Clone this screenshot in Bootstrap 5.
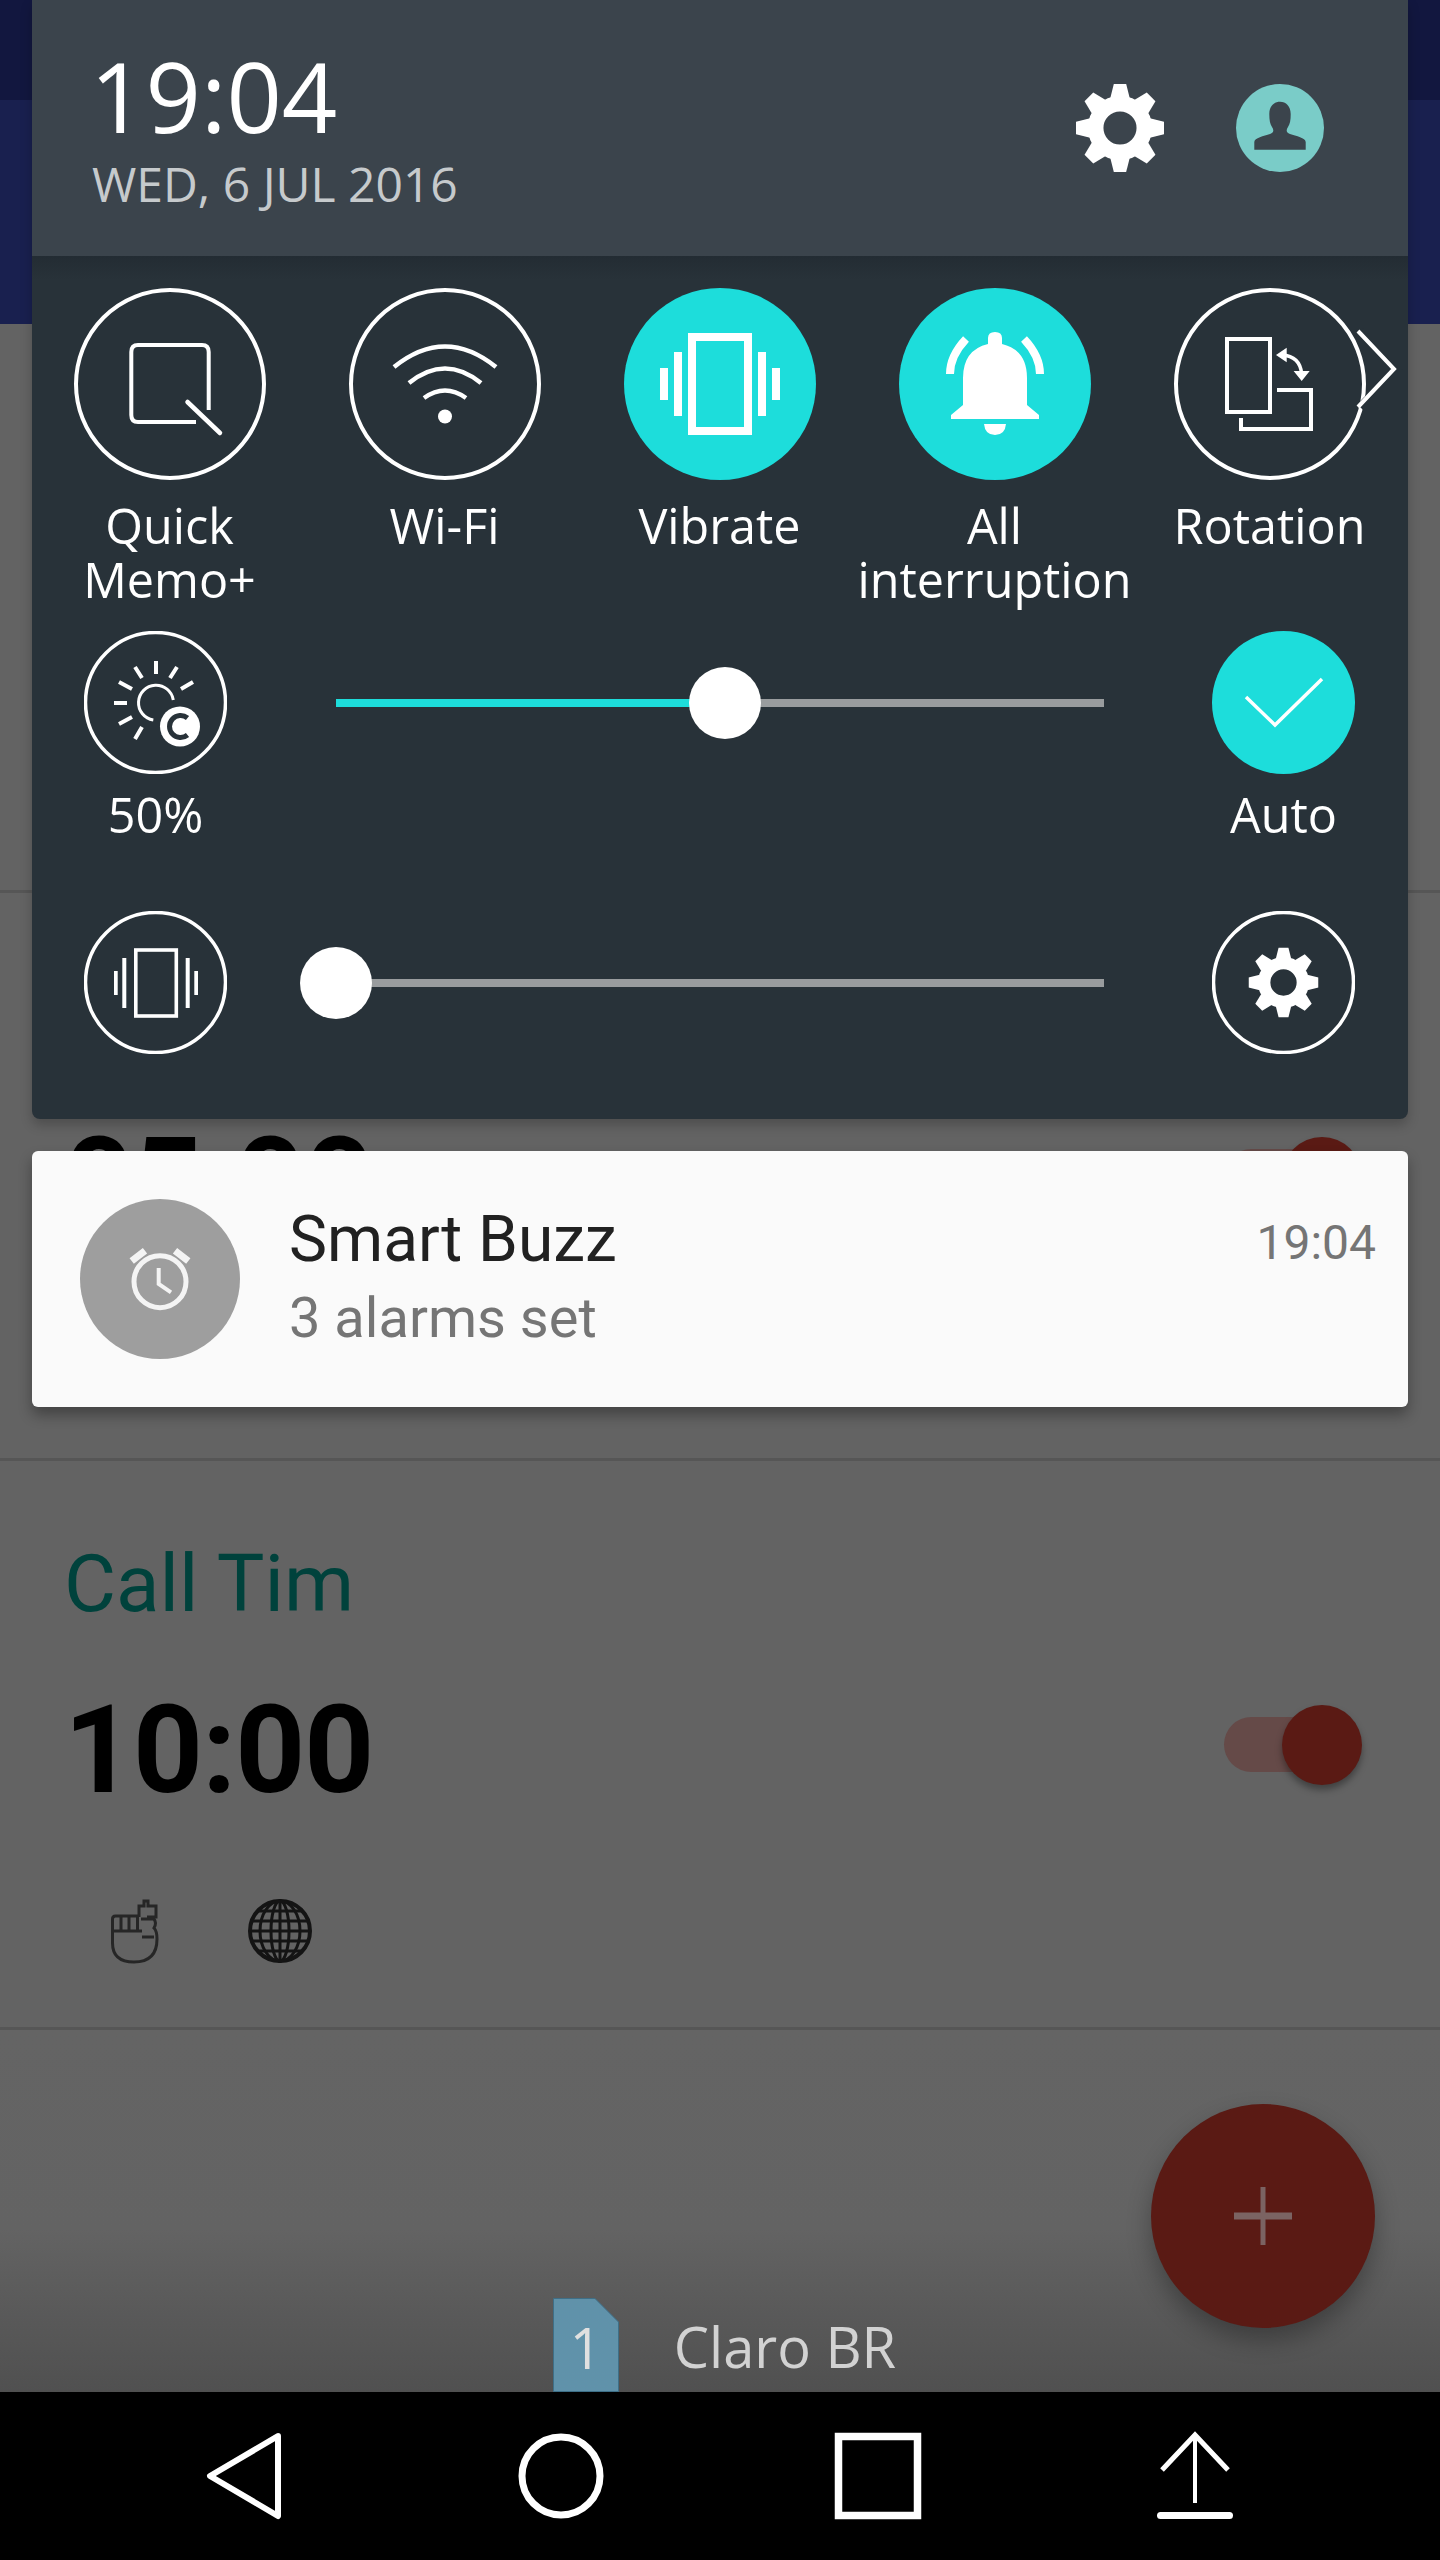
<!DOCTYPE html>
<html lang="en">
<head>
  <meta charset="UTF-8" />
  <title>Notification panel</title>
  <link rel="stylesheet" href="https://cdn.jsdelivr.net/npm/bootstrap@5.3.0/dist/css/bootstrap.min.css" />
  <style>
    html, body { margin: 0; background: #636363; }
    .phone { position: relative; width: 1440px; height: 2560px; overflow: hidden; background: #636363; font-family: "Open Sans", sans-serif; }

    /* app behind the panel */
    .band-top { height: 100px; background: #12173f; }
    .band-tabs { height: 224px; background: #19204f; }
    .alarm-row { border-bottom: 3px solid #565656; padding-left: 64px; overflow: hidden; }
    .alarm-title { font: 400 80px/90px Roboto, sans-serif; color: #00423c; padding-top: 78px; height: 220px; }
    .alarm-time { font: 700 122px/140px Roboto, sans-serif; color: #000; letter-spacing: -1px; }
    .alarm-switch { position: relative; width: 138px; height: 80px; margin-right: 78px; margin-bottom: 12px; }
    .switch-track { position: absolute; left: 0; top: 12px; width: 110px; height: 55px; border-radius: 28px; background: #654a48; }
    .switch-knob { position: absolute; right: 0; top: 0; width: 80px; height: 80px; border-radius: 50%; background: #5a1a14; box-shadow: 0 5px 7px rgba(0,0,0,.35); }
    .alarm-days { padding-left: 45px; gap: 89px; margin-top: 76px; }
    .soft-icon { filter: blur(.7px); }
    .list-foot { height: 362px; background: linear-gradient(#646464 0, #636363 55%, #505050 100%); }
    .sim-group { margin-left: 9px; gap: 55px; }
    .sim-label { font-size: 56px; line-height: 76px; color: #d2d2d2; padding-bottom: 8px; }
    .sim-card { position: relative; width: 66px; height: 94px; }
    .sim-num { position: absolute; left: 0; right: 0; top: 17px; text-align: center; font-size: 56px; line-height: 64px; color: #e0e0e0; }
    .fab { position: absolute; left: 1151px; top: 2104px; width: 224px; height: 224px; border-radius: 50%; background: #5a1a14; box-shadow: 0 12px 24px rgba(0,0,0,.3); }
    .navkeys { height: 168px; background: #000; padding-left: 85px; }
    .navkey { width: 317px; }

    /* quick settings panel */
    .drawer { position: absolute; left: 32px; top: 0; width: 1376px; height: 1119px; background: #283239; border-radius: 0 0 8px 8px; box-shadow: 0 6px 12px rgba(0,0,0,.22); }
    .drawer-head { height: 256px; background: #3b444c; padding: 0 84px 0 60px; }
    .clock { font-weight: 400; font-size: 97px; line-height: 100px; color: #fff; margin-left: -2px; padding-top: 45px; }
    .clock-date { font-size: 48px; line-height: 64px; color: #c6cacc; margin-top: 7px; }
    .head-gap { gap: 72px; }
    .tiles { display: grid; grid-template-columns: repeat(5, 275px); height: 375px; padding-top: 32px; position: relative; background: linear-gradient(#232c33 0, #283239 24px); border: 0; }
    .tile-label { font-size: 48.5px; line-height: 54px; color: #fff; text-align: center; margin-top: 18px; }
    .ring { display: block; width: 192px; height: 192px; margin: 0 auto; }
    .chevron { position: absolute; left: 1321px; top: 70px; }
    .slider-row { padding: 0 53px 0 52px; }
    .slider-cap { width: 143px; flex: none; }
    .ring-sm { display: block; width: 143px; height: 143px; }
    .cap-label { font-size: 48.5px; line-height: 64px; color: #fff; text-align: center; margin-top: 8px; white-space: nowrap; }
    .slider-rail { position: relative; flex: 1; height: 8px; margin: 68px 108px 0 109px; background: #999c9e; }
    .slider-fill { height: 8px; background: #1ddddb; }
    .slider-knob { position: absolute; top: -32px; width: 72px; height: 72px; margin-left: -36px; border-radius: 50%; background: #fff; }

    /* notification */
    .notice { position: absolute; left: 32px; top: 1151px; width: 1376px; height: 256px; background: #fafafa; border-radius: 6px; box-shadow: 0 8px 14px rgba(0,0,0,.32); padding: 48px 32px 0 48px; font-family: Roboto, sans-serif; }
    .notice-icon { width: 160px; height: 160px; flex: none; }
    .notice-body { padding-left: 49px; }
    .notice-title { font-size: 64px; line-height: 79px; color: #212121; margin-top: 1px; }
    .notice-text { font-size: 56px; line-height: 79px; color: #757575; }
    .notice-time { font-size: 48px; line-height: 79px; color: #757575; margin-top: 4px; }
  </style>
</head>
<body>

<svg width="0" height="0" class="position-absolute">
  <defs>
    <symbol id="gear" viewBox="-50 -50 100 100">
      <circle r="27.600" fill="none" stroke="#fff" stroke-width="17.600" />
      <g fill="#fff">
        <polygon id="gear-tooth" points="-7,-50 7,-50 11,-34 -11,-34" />
        <use href="#gear-tooth" transform="rotate(45)" />
        <use href="#gear-tooth" transform="rotate(90)" />
        <use href="#gear-tooth" transform="rotate(135)" />
        <use href="#gear-tooth" transform="rotate(180)" />
        <use href="#gear-tooth" transform="rotate(225)" />
        <use href="#gear-tooth" transform="rotate(270)" />
        <use href="#gear-tooth" transform="rotate(315)" />
      </g>
    </symbol>
  </defs>
</svg>

<div class="phone">

  <!-- App behind the panel -->
  <div class="band-top"></div>
  <div class="band-tabs"></div>
  <div class="alarm-row" style="height: 569px"></div>
  <div class="alarm-row" style="height: 568px">
    <div class="alarm-title">&nbsp;</div>
    <div class="d-flex justify-content-between align-items-center">
      <div class="alarm-time">05:00</div>
      <div class="alarm-switch"><div class="switch-track"></div><div class="switch-knob"></div></div>
    </div>
  </div>
  <div class="alarm-row" style="height: 569px">
    <div class="alarm-title">Call Tim</div>
    <div class="d-flex justify-content-between align-items-center">
      <div class="alarm-time">10:00</div>
      <div class="alarm-switch"><div class="switch-track"></div><div class="switch-knob"></div></div>
    </div>
    <div class="d-flex align-items-center alarm-days">
      <svg class="soft-icon" width="50" height="68" viewBox="0 0 50 68" fill="none" stroke="#262626" stroke-width="3">
        <path d="M3.500 34V22Q3.500 19 6.500 19H30M3.500 34H33M12 19V34M20 19V34M28.500 19V34" />
        <path d="M3.500 34V46Q3.500 65 25 65Q48 65 48 42Q48 34 45 31Q48 26 45 22H32" />
        <path d="M30 20V9H35V4H39V9H47V20H38" />
        <path d="M33 40H45" />
      </svg>
      <svg class="soft-icon" width="64" height="64" viewBox="-32 -32 64 64" fill="none" stroke="#141414">
        <circle r="30" stroke-width="4" />
        <g stroke-width="3">
          <ellipse rx="20" ry="30" />
          <ellipse rx="9" ry="30" />
          <path d="M-30 0H30M-28 -10H28M-28 10H28M-22 -20H22M-22 20H22M0 -30V30" />
        </g>
      </svg>
    </div>
  </div>
  <div class="list-foot d-flex justify-content-center align-items-end">
    <div class="sim-group d-flex align-items-end">
      <div class="sim-card">
        <svg width="66" height="94" viewBox="0 0 66 94" class="d-block">
          <path d="M.5 .5H42L65.500 24V93.500H.5Z" fill="#6092aa" stroke="#3e6f87" />
        </svg>
        <div class="sim-num">1</div>
      </div>
      <div class="sim-label">Claro BR</div>
    </div>
  </div>

  <!-- Navigation keys -->
  <div class="navkeys d-flex align-items-center">
    <div class="navkey d-flex justify-content-center">
      <svg width="90" height="90" viewBox="0 0 90 90" fill="none" stroke="#fff" stroke-width="6" stroke-linejoin="round"><path d="M79 5L11 45L79 85Z" /></svg>
    </div>
    <div class="navkey d-flex justify-content-center">
      <svg width="90" height="90" viewBox="0 0 90 90" fill="none" stroke="#fff" stroke-width="7"><circle cx="45" cy="45" r="39" /></svg>
    </div>
    <div class="navkey d-flex justify-content-center">
      <svg width="90" height="90" viewBox="0 0 90 90" fill="none" stroke="#fff" stroke-width="7.500"><rect x="5.500" y="5.500" width="79" height="79" /></svg>
    </div>
    <div class="navkey d-flex justify-content-center">
      <svg width="90" height="90" viewBox="0 0 90 90" fill="none" stroke="#fff">
        <path d="M45 5V72" stroke-width="4" />
        <path d="M12 39L45 4L78 39" stroke-width="5" />
        <path d="M10.500 84.500H79.500" stroke-width="7" stroke-linecap="round" />
      </svg>
    </div>
  </div>

  <!-- Add alarm -->
  <div class="fab d-flex align-items-center justify-content-center">
    <svg class="soft-icon" width="58" height="58" viewBox="0 0 58 58" fill="none" stroke="#7b6362"><path d="M29 0V58" stroke-width="5" /><path d="M0 29H58" stroke-width="7" /></svg>
  </div>

  <!-- Quick settings panel -->
  <div class="drawer">
    <div class="drawer-head d-flex justify-content-between">
      <div>
        <div class="clock">19:04</div>
        <div class="clock-date">WED, 6 JUL 2016</div>
      </div>
      <div class="d-flex align-items-center head-gap">
        <svg width="88" height="88"><use href="#gear" /></svg>
        <svg width="88" height="88" viewBox="0 0 88 88">
          <circle cx="44" cy="44" r="44" fill="#7accc8" />
          <path d="M18.300 65.700V58C18.300 54 28 52 34 50C38 48.500 38 46 36 43C34 40 33.300 36 33.300 30C33.300 22 38 17.700 44 17.700C50 17.700 54.700 22 54.700 30C54.700 36 54 40 52 43C50 46 50 48.500 54 50C60 52 69.700 54 69.700 58V65.700Z" fill="#3b444c" />
        </svg>
      </div>
    </div>

    <div class="tiles">
      <div>
        <svg class="ring" viewBox="0 0 192 192" fill="none" stroke="#fff">
          <circle cx="96" cy="96" r="94" stroke-width="4" />
          <path d="M134.700 122V64Q134.700 57 128 57H64Q57.300 57 57.300 64V127Q57.300 134 64 134H122" stroke-width="4" />
          <path d="M113.500 114L146 145" stroke-width="4.500" stroke-linecap="round" />
        </svg>
        <div class="tile-label">Quick<br />Memo+</div>
      </div>
      <div>
        <svg class="ring" viewBox="0 0 192 192" fill="none" stroke="#fff">
          <circle cx="96" cy="96" r="94" stroke-width="4" />
          <path d="M45 79Q96 38 147 79M60 95Q96 66 132 95M75 110Q96 95 117 110" stroke-width="4.500" />
          <circle cx="96" cy="128.500" r="7" fill="#fff" stroke="none" />
        </svg>
        <div class="tile-label">Wi-Fi</div>
      </div>
      <div>
        <svg class="ring" viewBox="0 0 192 192">
          <circle cx="96" cy="96" r="96" fill="#1ddddb" />
          <rect x="68" y="49" width="56" height="94" fill="none" stroke="#fff" stroke-width="8" />
          <path d="M36 80h8v32h-8zM50 64h8v64h-8zM134 64h8v64h-8zM148 80h8v32h-8z" fill="#fff" />
        </svg>
        <div class="tile-label">Vibrate</div>
      </div>
      <div>
        <svg class="ring" viewBox="0 0 192 192">
          <circle cx="96" cy="96" r="96" fill="#1ddddb" />
          <path d="M89 50Q89 44 96 44Q103 44 103 50V56Q128 62 128 90V117L140 127V131H52V127L64 117V90Q64 62 89 56Z" fill="#fff" />
          <path d="M85 136H107Q106 147 96 147Q86 147 85 136Z" fill="#fff" />
          <path d="M67 51Q51 68 51 86M125 51Q141 68 141 86" fill="none" stroke="#fff" stroke-width="8" />
        </svg>
        <div class="tile-label">All<br />interruption</div>
      </div>
      <div>
        <svg class="ring" viewBox="0 0 192 192" fill="none" stroke="#fff">
          <circle cx="96" cy="96" r="94" stroke-width="4" />
          <rect x="53" y="51" width="43" height="73" stroke-width="4" />
          <path d="M103 102H137V141H67V130" stroke-width="4" />
          <path d="M108 67Q126 68 127.700 86" stroke-width="3.500" />
          <path d="M112.700 59.700L102 67L112.700 74.300ZM119.600 83H135.700L127.700 93Z" fill="#fff" stroke="none" />
        </svg>
        <div class="tile-label">Rotation</div>
      </div>
      <svg class="chevron" width="50" height="90" viewBox="0 0 50 90" fill="none" stroke-miterlimit="10">
        <path d="M7 5L44 43L7 81" stroke="#283239" stroke-width="8" />
        <path d="M5 5L41 43L5 81" stroke="#fff" stroke-width="4" />
      </svg>
    </div>

    <!-- Brightness -->
    <div class="slider-row d-flex" style="height: 280px">
      <div class="slider-cap">
        <svg class="ring-sm" viewBox="0 0 143 143" fill="none" stroke="#fff">
          <circle cx="71.500" cy="71.500" r="70" stroke-width="3.500" />
          <path d="M89.300 69A17.500 17.500 0 1 0 69.300 89" stroke-width="3" />
          <path d="M72 30V43M51 36L58 47M93 36L86 47M35 51L48 58M109 51L97 58M30 72H43M35 93L48 86M51 108L58 96" stroke-width="4" />
          <circle cx="96" cy="95.500" r="20" fill="#fff" stroke="none" />
          <path d="M103.500 87A11 11 0 1 0 103.500 104" stroke="#283239" stroke-width="5" />
        </svg>
        <div class="cap-label">50%</div>
      </div>
      <div class="slider-rail">
        <div class="slider-fill" style="width: 50.6%"></div>
        <div class="slider-knob" style="left: 50.6%"></div>
      </div>
      <div class="slider-cap">
        <svg class="ring-sm" viewBox="0 0 143 143">
          <circle cx="71.500" cy="71.500" r="71.500" fill="#1ddddb" />
          <path d="M34 66L63 94L110 48" fill="none" stroke="#fff" stroke-width="3.500" />
        </svg>
        <div class="cap-label">Auto</div>
      </div>
    </div>

    <!-- Vibration strength -->
    <div class="slider-row d-flex">
      <div class="slider-cap">
        <svg class="ring-sm" viewBox="0 0 143 143" fill="none" stroke="#fff">
          <circle cx="71.500" cy="71.500" r="70" stroke-width="3.500" />
          <rect x="51.800" y="39" width="40.500" height="66" stroke-width="3.600" />
          <path d="M30 60h3.700v24H30zM38.300 47h4v50h-4zM101.700 47h4v50h-4zM110.300 60h3.700v24h-3.700z" fill="#fff" stroke="none" />
        </svg>
      </div>
      <div class="slider-rail">
        <div class="slider-knob" style="left: 0"></div>
      </div>
      <div class="slider-cap">
        <svg class="ring-sm" viewBox="0 0 143 143" fill="none" stroke="#fff">
          <circle cx="71.500" cy="71.500" r="70" stroke-width="3.500" />
          <use href="#gear" x="36.500" y="36.500" width="70" height="70" stroke="none" />
        </svg>
      </div>
    </div>
  </div>

  <!-- Notification -->
  <div class="notice d-flex">
    <svg class="notice-icon" viewBox="0 0 160 160" fill="none" stroke="#f4f4f4">
      <circle cx="80" cy="80" r="80" fill="#9e9e9e" stroke="none" />
      <g class="soft-icon">
        <circle cx="80" cy="82.700" r="26" stroke-width="5" />
        <path d="M51.700 62L65 51.700M108.300 62L95 51.700" stroke-width="7" />
        <path d="M78.700 69V85L91 93.300" stroke-width="4" />
      </g>
    </svg>
    <div class="notice-body flex-grow-1">
      <div class="notice-title">Smart Buzz</div>
      <div class="notice-text">3 alarms set</div>
    </div>
    <div class="notice-time">19:04</div>
  </div>

</div>

</body>
</html>
